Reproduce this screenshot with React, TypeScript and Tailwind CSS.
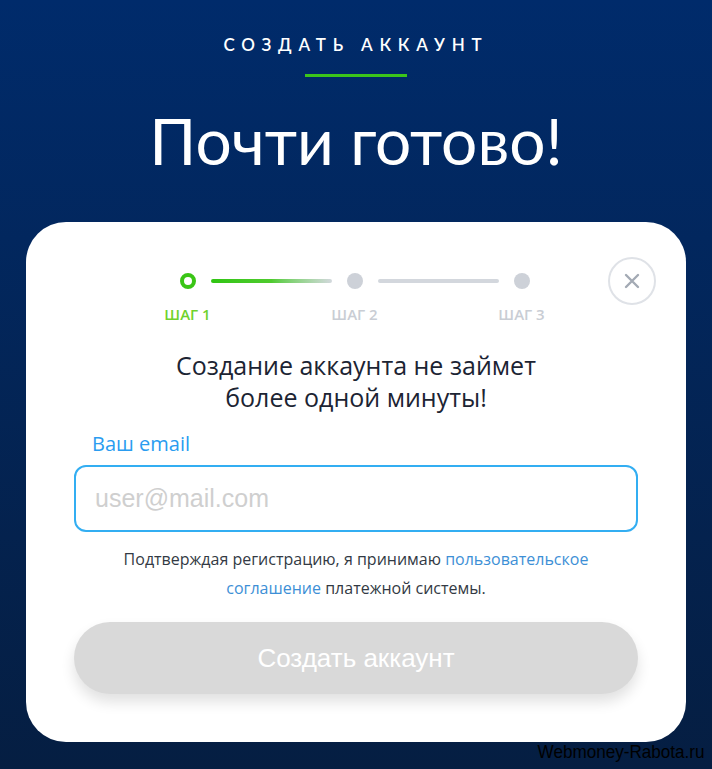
import React from "react";

const body = { fontFamily: "'Open Sans', 'Noto Sans', sans-serif" };
const arial = { fontFamily: "'Liberation Sans', Arial, sans-serif" };

export default function App() {
  return (
    <div className="relative w-full min-h-[769px] bg-gradient-to-b from-[#002b6b] to-[#051e42] flex flex-col items-center overflow-hidden" style={{ fontFamily: "Lato, 'Open Sans', sans-serif" }}>
      <div className="mt-[34px] text-white text-[17px] leading-[22px] tracking-[0.4em] font-semibold">СОЗДАТЬ АККАУНТ</div>
      <div className="mt-[18px] w-[102px] h-[3px] bg-[#3cc51a]"></div>
      <h1 className="mt-[26px] text-white text-[64px] leading-[76px] font-normal">Почти готово!</h1>

      <div className="relative mt-[43px] w-[660px] bg-white rounded-[40px] px-12 pb-12 pt-[51px] flex flex-col items-center" style={body}>
        <button className="absolute right-[30px] top-[35px] w-[48px] h-[48px] rounded-full border-2 border-[#dfe2e7] flex items-center justify-center">
          <svg width="16" height="16" viewBox="0 0 16 16" fill="none" stroke="#a3aab4" strokeWidth="2.4" strokeLinecap="round">
            <path d="M2 2 L14 14 M14 2 L2 14" />
          </svg>
        </button>

        <div className="flex items-start -ml-[3px]">
          <div className="w-4 flex flex-col items-center">
            <div className="w-4 h-4 rounded-full border-[4px] border-[#3ac516] bg-white"></div>
            <div className="mt-[15px] whitespace-nowrap text-[15px] leading-[20px] font-semibold text-[#6fd22c]">ШАГ 1</div>
          </div>
          <div className="mx-[15px] mt-[6px] w-[121px] h-[4px] rounded-full bg-gradient-to-r from-[#2fc511] via-[#4fcb2e] to-[#d3d8dd]"></div>
          <div className="w-4 flex flex-col items-center">
            <div className="w-4 h-4 rounded-full bg-[#cdd1d8]"></div>
            <div className="mt-[15px] whitespace-nowrap text-[15px] leading-[20px] font-semibold text-[#c9cdd4]">ШАГ 2</div>
          </div>
          <div className="mx-[15px] mt-[6px] w-[121px] h-[4px] rounded-full bg-[#d3d7dd]"></div>
          <div className="w-4 flex flex-col items-center">
            <div className="w-4 h-4 rounded-full bg-[#cdd1d8]"></div>
            <div className="mt-[15px] whitespace-nowrap text-[15px] leading-[20px] font-semibold text-[#c9cdd4]">ШАГ 3</div>
          </div>
        </div>

        <p className="mt-[25px] text-center text-[25px] leading-[32px] text-[#1c2433]">
          Создание аккаунта не займет
          <br />
          более одной минуты!
        </p>

        <div className="mt-[18px] w-full flex flex-col">
          <label className="pl-[18px] text-[20px] leading-[26px] text-[#2a9cf0]">Ваш email</label>
          <input
            className="mt-[8px] w-full h-[67px] rounded-[12px] border-2 border-[#33aef2] px-[19px] text-[25px] outline-none placeholder:text-[#cfcfcf]"
            style={arial}
            placeholder="user@mail.com"
          />
        </div>

        <p className="mt-[13px] text-center text-[16px] leading-[29px] text-[#333a44]">
          Подтверждая регистрацию, я принимаю <span className="text-[#3d8fd6]">пользовательское</span>
          <br />
          <span className="text-[#3d8fd6]">соглашение</span> платежной системы.
        </p>

        <button
          className="mt-[19px] w-full h-[72px] rounded-full bg-[#d9d9d9] text-white text-[26px] shadow-[0_8px_14px_rgba(0,0,0,0.12)]"
          style={arial}
        >
          Создать аккаунт
        </button>
      </div>

      <div
        className="absolute right-[7px] bottom-[6px] text-black text-[19px] leading-[22px] origin-right scale-x-[0.9]"
        style={arial}
      >
        Webmoney-Rabota.ru
      </div>
    </div>
  );
}
